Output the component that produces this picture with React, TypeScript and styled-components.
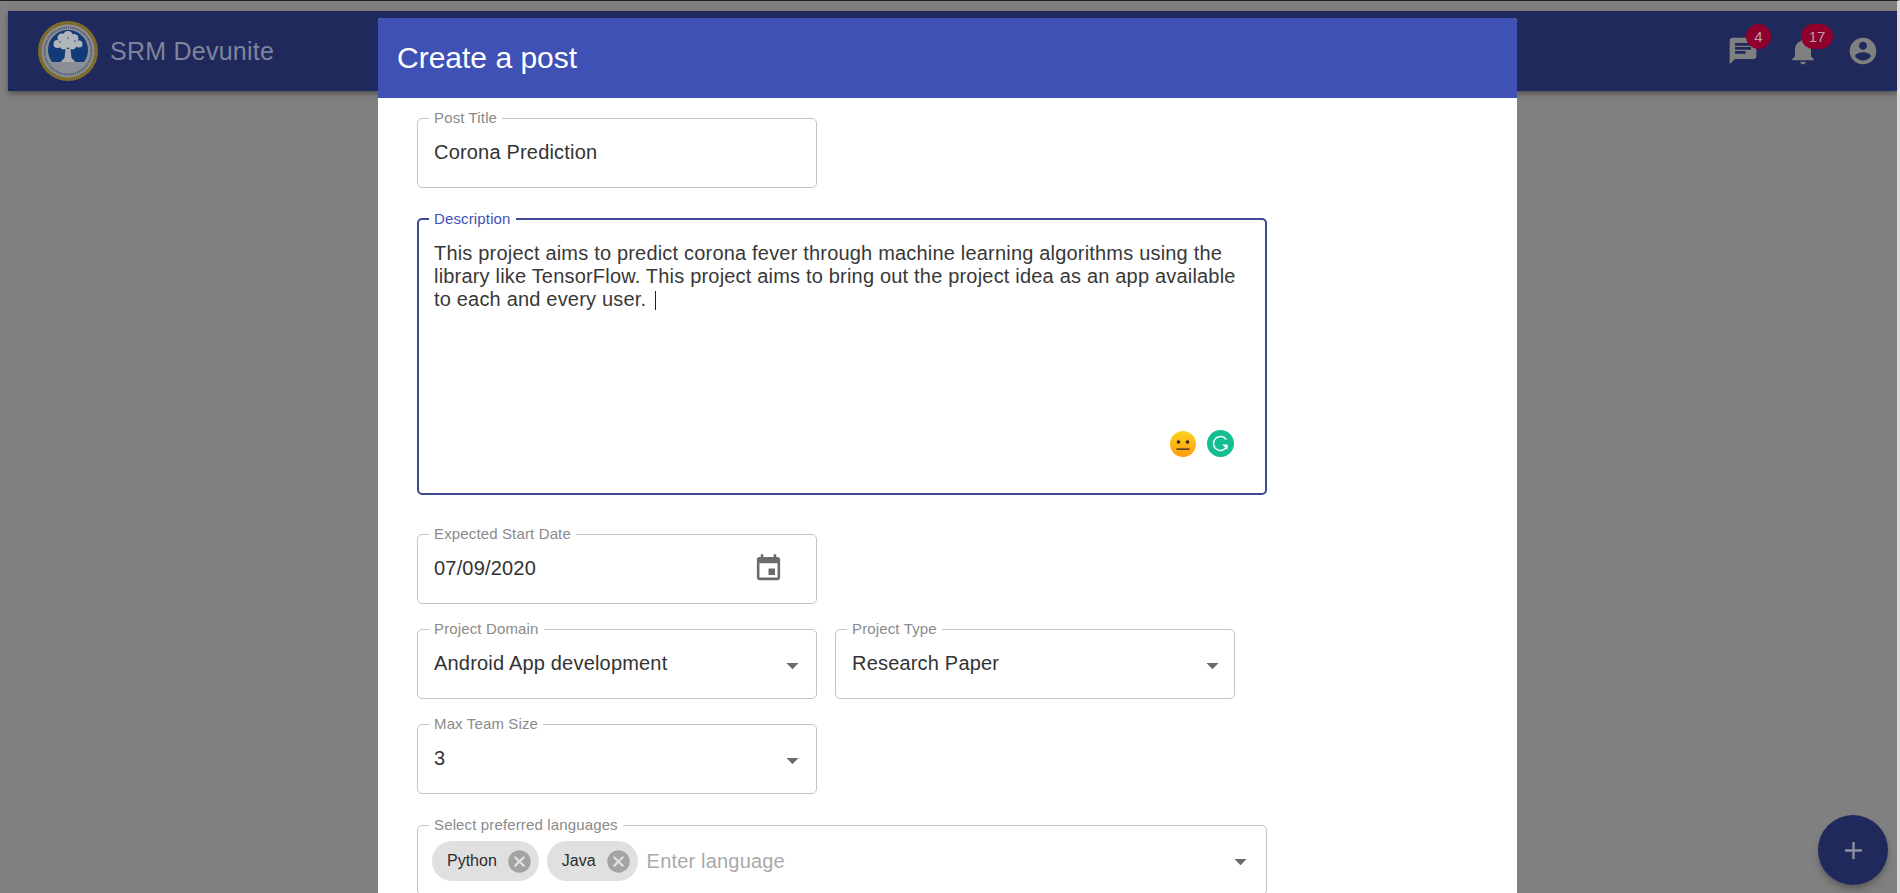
import React from 'react'
import styled, { createGlobalStyle } from 'styled-components'

const GlobalStyle = createGlobalStyle`
  html, body {
    margin: 0;
    padding: 0;
    overflow: hidden;
  }
  body {
    font-family: "Liberation Sans", Arial, sans-serif;
  }
`

const Page = styled.div`
  position: relative;
  box-sizing: border-box;
  height: 893px;
  overflow: hidden;
  background: #808080;
  border-top: 1px solid #1c2626;
  border-right: 3px solid #dcdcdc;
  padding: 10px 0 0 8px;
`

const AppBar = styled.header`
  height: 80px;
  background: #1f295c;
  box-shadow: 0 2px 4px -1px rgba(0, 0, 0, 0.2), 0 4px 5px rgba(0, 0, 0, 0.14), 0 1px 10px rgba(0, 0, 0, 0.12);
  display: flex;
  align-items: center;
  padding: 0 18px 0 30px;
`

const Brand = styled.div`
  flex: 1;
  display: flex;
  align-items: center;
  gap: 12px;
`

const BrandName = styled.span`
  font-size: 25px;
  letter-spacing: 0.25px;
  color: #80849b;
`

const IconRow = styled.div`
  display: flex;
  align-items: center;
  gap: 28px;
`

const IconSlot = styled.div`
  position: relative;
  width: 32px;
  height: 32px;
  color: #808080;
`

const Badge = styled.span<{ $wide?: boolean }>`
  position: absolute;
  top: -11px;
  left: ${(p) => (p.$wide ? '14px' : '19px')};
  min-width: ${(p) => (p.$wide ? '32px' : '25px')};
  height: 25px;
  border-radius: 13px;
  background: #8f002c;
  color: #b6a0a6;
  font-size: 15px;
  line-height: 25px;
  text-align: center;
`

const Fab = styled.button`
  position: absolute;
  left: 1818px;
  top: 814px;
  width: 70px;
  height: 70px;
  padding: 0;
  border: 0;
  border-radius: 50%;
  background: #1f295c;
  color: #8e90a0;
  display: flex;
  align-items: center;
  justify-content: center;
  box-shadow: 0 3px 5px -1px rgba(0, 0, 0, 0.2), 0 6px 10px rgba(0, 0, 0, 0.14);
`

const Dialog = styled.div`
  position: absolute;
  left: 378px;
  top: 17px;
  width: 1139px;
  bottom: 0;
  background: #fff;
  border-radius: 4px 4px 0 0;
  overflow: hidden;
  display: flex;
  flex-direction: column;
`

const DialogHeader = styled.h2`
  flex: none;
  margin: 0;
  height: 80px;
  box-sizing: border-box;
  padding-left: 19px;
  background: #3f51b5;
  color: #fff;
  font-size: 30px;
  font-weight: 400;
  line-height: 80px;
`

const DialogBody = styled.form`
  flex: 1;
  overflow: hidden;
  padding: 12px 0 0 39px;
  display: flex;
  flex-direction: column;
  align-items: flex-start;
`

const Row = styled.div`
  display: flex;
  gap: 18px;
`

const Field = styled.fieldset<{ $wide?: boolean; $focused?: boolean; $gap?: number }>`
  flex: none;
  position: relative;
  box-sizing: border-box;
  margin: ${(p) => p.$gap ?? 0}px 0 0;
  min-width: 0;
  width: ${(p) => (p.$wide ? '850px' : '400px')};
  padding: 0 ${(p) => (p.$focused ? '15px' : '16px')};
  border: ${(p) => (p.$focused ? '2px solid #3d4a93' : '1px solid #c4c4c4')};
  border-radius: 5px;
`

const Legend = styled.legend<{ $focused?: boolean }>`
  margin-left: -5px;
  padding: 0 5px;
  height: 16px;
  font-size: 15px;
  letter-spacing: 0.14px;
  line-height: 16px;
  color: ${(p) => (p.$focused ? '#3f51b5' : '#8a8a8a')};
`

const ValueRow = styled.div`
  height: 61px;
  display: flex;
  align-items: center;
  justify-content: space-between;
  padding-bottom: 8px;
  box-sizing: border-box;
  font-size: 20px;
  letter-spacing: 0.19px;
  color: #333;
`

const EndIcon = styled.span<{ $right: number; $down?: number }>`
  display: flex;
  margin-right: ${(p) => p.$right}px;
  margin-top: ${(p) => p.$down ?? 0}px;
  color: #6b6b6b;
`

const DescriptionText = styled.div`
  height: 266px;
  padding-top: 15px;
  box-sizing: border-box;
  font-size: 20px;
  letter-spacing: 0.19px;
  line-height: 23px;
  color: #383838;
`

const Caret = styled.span`
  display: inline-block;
  width: 1px;
  height: 19px;
  margin-left: 9px;
  vertical-align: -4px;
  background: #222;
`

const Extensions = styled.div`
  position: absolute;
  right: 31px;
  bottom: 36px;
  display: flex;
  align-items: center;
  gap: 11px;
`

const ChipRow = styled.div`
  height: 61px;
  padding: 0 0 5px;
  margin-left: -2px;
  box-sizing: border-box;
  display: flex;
  align-items: center;
  gap: 8px;
`

const Chip = styled.span`
  height: 40px;
  box-sizing: border-box;
  padding: 0 6px 0 15px;
  border-radius: 20px;
  background: #e0e0e0;
  color: #2c2c2c;
  font-size: 16px;
  display: flex;
  align-items: center;
  gap: 9px;
`

const Placeholder = styled.span`
  flex: 1;
  margin-left: 1px;
  font-size: 20px;
  letter-spacing: 0.19px;
  color: #a9a9a9;
`

type IconProps = { d: string; size: number; color?: string }

const Icon = ({ d, size, color = 'currentColor' }: IconProps) => (
  <svg width={size} height={size} viewBox="0 0 24 24" fill={color} style={{ display: 'block' }}>
    <path d={d} />
  </svg>
)

const paths = {
  chat: 'M20 2H4c-1.1 0-1.99.9-1.99 2L2 22l4-4h14c1.1 0 2-.9 2-2V4c0-1.1-.9-2-2-2zM6 9h12v2H6V9zm8 5H6v-2h8v2zm4-6H6V6h12v2z',
  bell: 'M12 22c1.1 0 2-.9 2-2h-4c0 1.1.89 2 2 2zm6-6v-5c0-3.07-1.64-5.64-4.5-6.32V4c0-.83-.67-1.5-1.5-1.5s-1.5.67-1.5 1.5v.68C7.63 5.36 6 7.92 6 11v5l-2 2v1h16v-1l-2-2z',
  account:
    'M12 2C6.48 2 2 6.48 2 12s4.48 10 10 10 10-4.48 10-10S17.52 2 12 2zm0 3c1.66 0 3 1.34 3 3s-1.34 3-3 3-3-1.34-3-3 1.34-3 3-3zm0 14.2c-2.5 0-4.71-1.28-6-3.22.03-1.99 4-3.08 6-3.08 1.99 0 5.97 1.09 6 3.08-1.29 1.94-3.5 3.22-6 3.22z',
  event:
    'M17 12h-5v5h5v-5zM16 1v2H8V1H6v2H5c-1.11 0-1.99.9-1.99 2L3 19c0 1.1.89 2 2 2h14c1.1 0 2-.9 2-2V5c0-1.1-.9-2-2-2h-1V1h-2zm3 18H5V8h14v11z',
  cancel:
    'M12 2C6.47 2 2 6.47 2 12s4.47 10 10 10 10-4.47 10-10S17.53 2 12 2zm5 13.59L15.59 17 12 13.41 8.41 17 7 15.59 10.59 12 7 8.41 8.41 7 12 10.59 15.59 7 17 8.41 13.41 12 17 15.59z',
  add: 'M19 13h-6v6h-2v-6H5v-2h6V5h2v6h6v2z',
  drop: 'M7 10l5 5 5-5z',
}

const Logo = () => (
  <svg width="60" height="60" viewBox="0 0 60 60" style={{ flex: 'none' }}>
    <circle cx="30" cy="30" r="30" fill="#7d6c2b" />
    <circle cx="30" cy="30" r="26.5" fill="#8b8e95" />
    <circle cx="30" cy="30" r="23.5" fill="none" stroke="#4c556e" strokeWidth="2" strokeDasharray="1.2 1" />
    <path d="M14 41a20 20 0 1 1 32 0z" fill="#123a78" />
    <path d="M27.5 28h5l1 9 4 4H22.5l4-4z" fill="#a9adb3" />
    <g fill="#b0b5bc">
      <circle cx="30" cy="15" r="5" />
      <circle cx="24" cy="17" r="4.5" />
      <circle cx="36" cy="17.5" r="4.5" />
      <circle cx="19.5" cy="23" r="4" />
      <circle cx="41" cy="23" r="3.6" />
      <circle cx="26" cy="24" r="4.5" />
      <circle cx="34" cy="24" r="4.5" />
      <circle cx="30" cy="20" r="4.5" />
    </g>
    <circle cx="22" cy="21" r="0.9" fill="#5d6a85" />
    <circle cx="37" cy="20" r="0.9" fill="#5d6a85" />
    <circle cx="30" cy="17" r="0.9" fill="#5d6a85" />
  </svg>
)

const NeutralFace = () => (
  <svg width="26" height="26" viewBox="0 0 26 26">
    <defs>
      <linearGradient id="faceFill" x1="0" y1="0" x2="0" y2="1">
        <stop offset="0" stopColor="#ffd21f" />
        <stop offset="1" stopColor="#ff9d0b" />
      </linearGradient>
    </defs>
    <circle cx="13" cy="13" r="13" fill="url(#faceFill)" />
    <circle cx="8.5" cy="11" r="1.8" fill="#33261a" />
    <circle cx="17.5" cy="11" r="1.8" fill="#33261a" />
    <rect x="6.5" y="17.5" width="13" height="1.3" fill="#33261a" />
  </svg>
)

const GrammarlyMark = () => (
  <svg width="27" height="27" viewBox="0 0 27 27">
    <circle cx="13.5" cy="13.5" r="13.5" fill="#15bd93" />
    <path d="M19.3 9.6a7 7 0 1 0 .6 6.6" fill="none" stroke="#fff" strokeWidth="1.5" />
    <path d="M15 14.6h5.6v5.2z" fill="#fff" />
  </svg>
)

const Dropdown = ({ right = -7, down = 4 }: { right?: number; down?: number }) => (
  <EndIcon $right={right} $down={down}>
    <Icon d={paths.drop} size={29} />
  </EndIcon>
)

export default function App() {
  return (
    <>
      <GlobalStyle />
      <Page>
        <AppBar>
          <Brand>
            <Logo />
            <BrandName>SRM Devunite</BrandName>
          </Brand>
          <IconRow>
            <IconSlot>
              <Icon d={paths.chat} size={32} />
              <Badge>4</Badge>
            </IconSlot>
            <IconSlot>
              <Icon d={paths.bell} size={32} />
              <Badge $wide>17</Badge>
            </IconSlot>
            <IconSlot>
              <Icon d={paths.account} size={32} />
            </IconSlot>
          </IconRow>
        </AppBar>
        <Fab type="button">
          <Icon d={paths.add} size={29} />
        </Fab>
        <Dialog>
          <DialogHeader>Create a post</DialogHeader>
          <DialogBody>
            <Field>
              <Legend>Post Title</Legend>
              <ValueRow>Corona Prediction</ValueRow>
            </Field>
            <Field $wide $focused $gap={23}>
              <Legend $focused>Description</Legend>
              <DescriptionText>
                This project aims to predict corona fever through machine learning algorithms using the library like
                TensorFlow. This project aims to bring out the project idea as an app available to each and every user.
                <Caret />
              </DescriptionText>
              <Extensions>
                <NeutralFace />
                <GrammarlyMark />
              </Extensions>
            </Field>
            <Field $gap={31}>
              <Legend>Expected Start Date</Legend>
              <ValueRow>
                07/09/2020
                <EndIcon $right={16}>
                  <Icon d={paths.event} size={31} />
                </EndIcon>
              </ValueRow>
            </Field>
            <Row>
              <Field $gap={17}>
                <Legend>Project Domain</Legend>
                <ValueRow>
                  Android App development
                  <Dropdown />
                </ValueRow>
              </Field>
              <Field $gap={17}>
                <Legend>Project Type</Legend>
                <ValueRow>
                  Research Paper
                  <Dropdown right={-9} />
                </ValueRow>
              </Field>
            </Row>
            <Field $gap={17}>
              <Legend>Max Team Size</Legend>
              <ValueRow>
                3
                <Dropdown />
              </ValueRow>
            </Field>
            <Field $wide $gap={23}>
              <Legend>Select preferred languages</Legend>
              <ChipRow>
                <Chip>
                  Python
                  <Icon d={paths.cancel} size={27} color="#a3a3a3" />
                </Chip>
                <Chip>
                  Java
                  <Icon d={paths.cancel} size={27} color="#a3a3a3" />
                </Chip>
                <Placeholder>Enter language</Placeholder>
                <Dropdown right={-5} down={1} />
              </ChipRow>
            </Field>
          </DialogBody>
        </Dialog>
      </Page>
    </>
  )
}
